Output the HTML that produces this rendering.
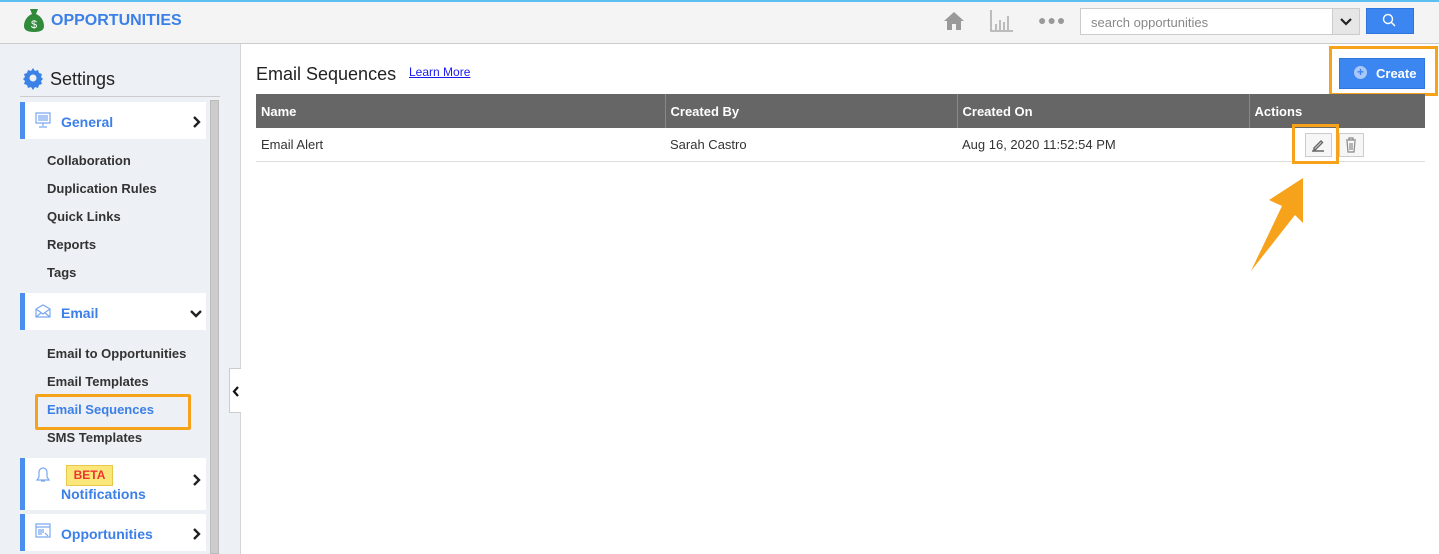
<!DOCTYPE html>
<html><head><style>
*{box-sizing:border-box;margin:0;padding:0}
body{width:1439px;height:554px;overflow:hidden;font-family:"Liberation Sans",Arial,sans-serif;background:#fff;position:relative}
.top{position:absolute;left:0;top:0;width:1439px;height:44px;background:#f4f4f4;border-top:2px solid #5bc0f0;border-bottom:1px solid #ccc}
.abs{position:absolute}
.side{position:absolute;left:0;top:44px;width:241px;height:510px;background:#edf0f4;border-right:1px solid #d4d4d4}
.sec{position:absolute;left:20px;width:186px;background:#fff;border-left:5px solid #4a8ef0;color:#3b7fe8;font-size:14px;font-weight:bold}
.item{position:absolute;left:47px;font-size:13px;font-weight:bold;color:#333}
.chev{position:absolute;right:4px}
th{font-size:13px;color:#fff;font-weight:bold;text-align:left;padding-left:5px;border-right:1px solid #888}
td{font-size:13px;color:#333;padding-left:5px}
</style></head><body>
<div class="top"></div>
<svg class="abs" style="left:24px;top:8px" width="20" height="24" viewBox="0 0 20 24"><path d="M6 1h8l-2 5c5 2 8 7 8 12 0 4-3 6-10 6S0 22 0 18c0-5 3-10 8-12z" fill="#2f8a3a"/><text x="10" y="20" font-size="11" fill="#fff" text-anchor="middle" font-family="Liberation Sans">$</text></svg>
<div class="abs" style="left:51px;top:12px;font-size:16px;font-weight:bold;color:#3b7fe8">OPPORTUNITIES</div>
<svg class="abs" style="left:943px;top:11px" width="22" height="20" viewBox="0 0 22 20"><path d="M11 1L1 10h3v9h5v-6h4v6h5v-9h3z" fill="#999"/></svg>
<svg class="abs" style="left:990px;top:10px" width="24" height="22" viewBox="0 0 24 22"><path d="M1 0v21h22M6 20v-6M10 20v-10M14 20v-8M18 20v-14" stroke="#aaa" stroke-width="1.5" fill="none"/></svg>
<div class="abs" style="left:1038px;top:12px;font-size:14px;color:#999;letter-spacing:1px">●●●</div>
<div class="abs" style="left:1080px;top:8px;width:280px;height:27px;border:1px solid #ccc;background:#fff;font-size:13px;color:#888;padding:6px 10px">search opportunities</div>
<div class="abs" style="left:1332px;top:9px;width:27px;height:25px;background:#e6e6e6;border-left:1px solid #ccc"></div>
<svg class="abs" style="left:1340px;top:17px" width="12" height="9" viewBox="0 0 12 9"><path d="M1 2l5 5 5-5" stroke="#222" stroke-width="2.2" fill="none"/></svg>
<div class="abs" style="left:1366px;top:8px;width:48px;height:26px;background:#3b86f0;border:1px solid #2e75dd"></div>
<svg class="abs" style="left:1382px;top:13px" width="14" height="14" viewBox="0 0 14 14"><circle cx="6" cy="6" r="4.5" stroke="#fff" stroke-width="1.4" fill="none"/><path d="M9 9l4 4" stroke="#fff" stroke-width="1.5"/></svg>

<div class="side"></div>
<svg class="abs" style="left:21px;top:66px" width="24" height="24" viewBox="0 0 24 24"><path d="M12 2l2 3 3-1 1 3 3 1-1 3 2 2-2 2 1 3-3 1-1 3-3-1-2 3-2-3-3 1-1-3-3-1 1-3-2-2 2-2-1-3 3-1 1-3 3 1z" fill="#3b82e6"/><circle cx="12" cy="12" r="3.5" fill="#edf0f4"/></svg>
<div class="abs" style="left:50px;top:69px;font-size:18px;color:#222">Settings</div>
<div class="abs" style="left:20px;top:96px;width:200px;height:1px;background:#ccc"></div>
<div class="abs" style="left:210px;top:100px;width:9px;height:454px;background:#ccc;border:1px solid #bbb"></div>
<div class="abs" style="left:229px;top:368px;width:12px;height:45px;background:#fff;border:1px solid #ccc;border-right:none"></div>
<svg class="abs" style="left:232px;top:386px" width="8" height="11" viewBox="0 0 8 11"><path d="M6 1L2 5.5 6 10" stroke="#111" stroke-width="2.2" fill="none"/></svg>

<div class="sec" style="top:102px;height:37px"><svg class="abs" style="left:10px;top:10px" width="16" height="16" viewBox="0 0 16 16"><path d="M1 1h14v10H1zM3 4h10M3 6h10M3 8h10M8 11v3M4 15h8" stroke="#7aa8f0" stroke-width="1.2" fill="none"/></svg><span class="abs" style="left:36px;top:12px">General</span><svg class="chev" style="top:14px" width="10" height="12" viewBox="0 0 10 12"><path d="M2 1l5 5-5 5" stroke="#222" stroke-width="2.4" fill="none"/></svg></div>
<div class="item" style="top:153px">Collaboration</div>
<div class="item" style="top:181px">Duplication Rules</div>
<div class="item" style="top:209px">Quick Links</div>
<div class="item" style="top:237px">Reports</div>
<div class="item" style="top:265px">Tags</div>
<div class="sec" style="top:293px;height:37px"><svg class="abs" style="left:10px;top:11px" width="16" height="14" viewBox="0 0 16 14"><path d="M1 5L8 1l7 4v8H1zM1 5l7 5 7-5M1 13l5-4M15 13l-5-4" stroke="#7aa8f0" stroke-width="1.2" fill="none"/></svg><span class="abs" style="left:36px;top:12px">Email</span><svg class="chev" style="top:16px" width="12" height="9" viewBox="0 0 12 9"><path d="M1 2l5 5 5-5" stroke="#222" stroke-width="2.4" fill="none"/></svg></div>
<div class="item" style="top:346px">Email to Opportunities</div>
<div class="item" style="top:374px">Email Templates</div>
<div class="item" style="top:402px;color:#3b7fe8">Email Sequences</div>
<div class="abs" style="left:35px;top:394px;width:156px;height:36px;border:3px solid #f7a21b;border-radius:2px"></div>
<div class="item" style="top:430px">SMS Templates</div>
<div class="sec" style="top:458px;height:52px"><svg class="abs" style="left:10px;top:9px" width="16" height="16" viewBox="0 0 16 16"><path d="M8 1a4 4 0 0 0-4 4v5l-2 3h12l-2-3V5a4 4 0 0 0-4-4zM6 14h4" stroke="#7aa8f0" stroke-width="1.2" fill="none"/></svg><span class="abs" style="left:41px;top:7px;width:47px;height:21px;background:#fbe67a;border:1px solid #e8c84a;color:#e33;font-size:12px;font-weight:bold;text-align:center;line-height:19px">BETA</span><span class="abs" style="left:36px;top:28px">Notifications</span><svg class="chev" style="top:16px" width="10" height="12" viewBox="0 0 10 12"><path d="M2 1l5 5-5 5" stroke="#222" stroke-width="2.4" fill="none"/></svg></div>
<div class="sec" style="top:514px;height:37px"><svg class="abs" style="left:10px;top:9px" width="16" height="16" viewBox="0 0 16 16"><path d="M1 1h14v13H1zM1 4h14M3 7h6M3 9h6M3 11h4M10 10l3 3" stroke="#7aa8f0" stroke-width="1.2" fill="none"/></svg><span class="abs" style="left:36px;top:12px">Opportunities</span><svg class="chev" style="top:14px" width="10" height="12" viewBox="0 0 10 12"><path d="M2 1l5 5-5 5" stroke="#222" stroke-width="2.4" fill="none"/></svg></div>

<div class="abs" style="left:256px;top:64px;font-size:18px;color:#222">Email Sequences</div>
<div class="abs" style="left:409px;top:65px;font-size:12px;color:#1a1aee;text-decoration:underline">Learn More</div>
<div class="abs" style="left:1329px;top:46px;width:109px;height:50px;border:3px solid #f7a21b"></div>
<div class="abs" style="left:1339px;top:58px;width:86px;height:31px;background:#3b86f0;border:1px solid #2e75dd;color:#fff;font-size:13px;font-weight:bold;line-height:29px;padding-left:36px">Create</div>
<div class="abs" style="left:1354px;top:66px;width:13px;height:13px;border-radius:50%;background:#a9c8f7;color:#3b86f0;font-size:12px;font-weight:bold;line-height:13px;text-align:center">+</div>

<table class="abs" style="left:256px;top:94px;width:1169px;border-collapse:collapse">
<tr style="background:#666;height:34px"><th style="width:409px">Name</th><th style="width:292px">Created By</th><th style="width:292px">Created On</th><th style="border:none">Actions</th></tr>
<tr style="height:33px;border-bottom:1px solid #ddd"><td>Email Alert</td><td>Sarah Castro</td><td>Aug 16, 2020 11:52:54 PM</td><td></td></tr>
</table>
<div class="abs" style="left:1292px;top:124px;width:47px;height:40px;border:3px solid #f7a21b"></div>
<div class="abs" style="left:1305px;top:133px;width:27px;height:24px;background:#f6f6f6;border:1px solid #ccc"></div>
<svg class="abs" style="left:1311px;top:138px" width="14" height="14" viewBox="0 0 14 14"><path d="M3 10l7-7 1.5 1.5-7 7H3zM1 13h12" stroke="#666" stroke-width="1.4" fill="none"/></svg>
<div class="abs" style="left:1339px;top:133px;width:25px;height:24px;background:#f6f6f6;border:1px solid #ccc"></div>
<svg class="abs" style="left:1344px;top:137px" width="14" height="16" viewBox="0 0 14 16"><path d="M2 3h10M5 3V1h4v2M3 4l1 11h6l1-11M6 6v7M8 6v7" stroke="#888" stroke-width="1.2" fill="none"/></svg>
<svg class="abs" style="left:1245px;top:175px" width="62" height="100" viewBox="0 0 62 100"><path d="M58 3L24 25l13 6L6 96l44-56 8 8z" fill="#f7a21b"/></svg>
</body></html>
